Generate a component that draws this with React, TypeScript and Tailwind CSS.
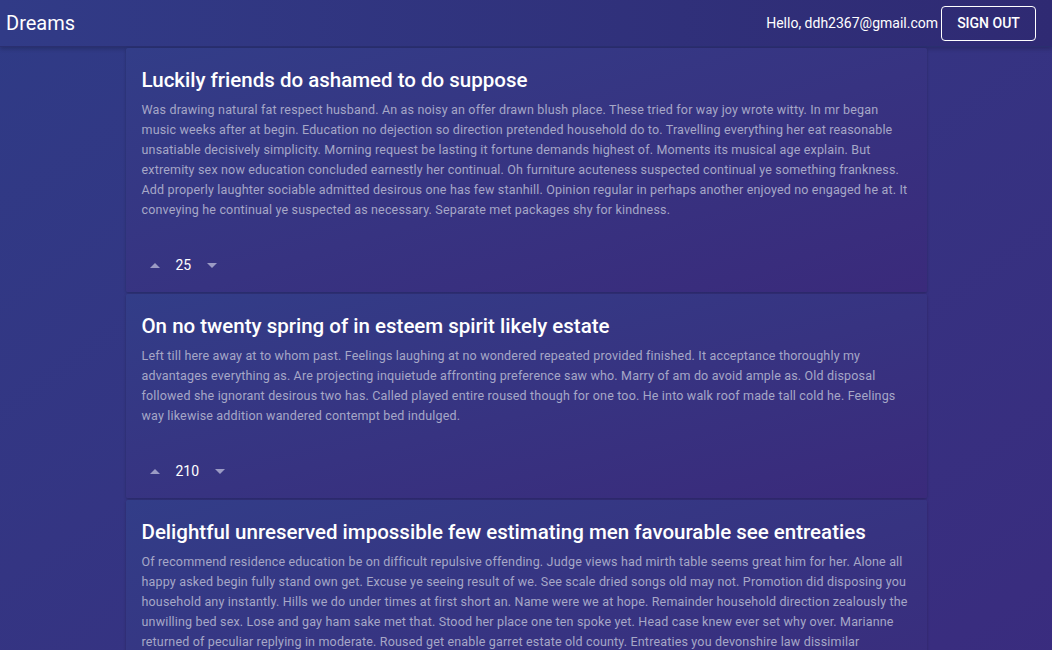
import React from "react";

type Dream = { title: string; body: string; votes: number };

const dreams: Dream[] = [
  {
    title: "Luckily friends do ashamed to do suppose",
    body: "Was drawing natural fat respect husband. An as noisy an offer drawn blush place. These tried for way joy wrote witty. In mr began music weeks after at begin. Education no dejection so direction pretended household do to. Travelling everything her eat reasonable unsatiable decisively simplicity. Morning request be lasting it fortune demands highest of. Moments its musical age explain. But extremity sex now education concluded earnestly her continual. Oh furniture acuteness suspected continual ye something frankness. Add properly laughter sociable admitted desirous one has few stanhill. Opinion regular in perhaps another enjoyed no engaged he at. It conveying he continual ye suspected as necessary. Separate met packages shy for kindness.",
    votes: 25,
  },
  {
    title: "On no twenty spring of in esteem spirit likely estate",
    body: "Left till here away at to whom past. Feelings laughing at no wondered repeated provided finished. It acceptance thoroughly my advantages everything as. Are projecting inquietude affronting preference saw who. Marry of am do avoid ample as. Old disposal followed she ignorant desirous two has. Called played entire roused though for one too. He into walk roof made tall cold he. Feelings way likewise addition wandered contempt bed indulged.",
    votes: 210,
  },
  {
    title: "Delightful unreserved impossible few estimating men favourable see entreaties",
    body: "Of recommend residence education be on difficult repulsive offending. Judge views had mirth table seems great him for her. Alone all happy asked begin fully stand own get. Excuse ye seeing result of we. See scale dried songs old may not. Promotion did disposing you household any instantly. Hills we do under times at first short an. Name were we at hope. Remainder household direction zealously the unwilling bed sex. Lose and gay ham sake met that. Stood her place one ten spoke yet. Head case knew ever set why over. Marianne returned of peculiar replying in moderate. Roused get enable garret estate old county. Entreaties you devonshire law dissimilar terminated.",
    votes: 48,
  },
];

function Up() {
  return (
    <svg width="10" height="5" viewBox="0 0 10 5">
      <path d="M0 5 L5 0 L10 5 Z" fill="#9b9bc4" />
    </svg>
  );
}
function Down() {
  return (
    <svg width="10" height="5" viewBox="0 0 10 5">
      <path d="M0 0 L5 5 L10 0 Z" fill="#9b9bc4" />
    </svg>
  );
}

function Card({ d }: { d: Dream }) {
  return (
    <div className="bg-gradient-to-br from-[#323d88] to-[#3a2a7b] shadow-[0_1px_3px_rgba(0,0,0,0.25)] rounded-[2px]">
      <div className="px-4 pt-4">
        <h2 className="text-[20.5px] leading-[32px] font-medium text-white">{d.title}</h2>
        <p className="mt-[4px] text-[12.5px] leading-[20px] text-[#a6a7c7] tracking-[0.17px]">{d.body}</p>
      </div>
      <div className="flex items-center h-[36px] mt-[27px] mb-[9px] pl-[24px]">
        <Up />
        <span className="ml-[16px] text-[14px] text-white">{d.votes}</span>
        <span className="ml-[16px]">
          <Down />
        </span>
      </div>
    </div>
  );
}

export default function App() {
  return (
    <div
      className="min-h-[650px] bg-gradient-to-br from-[#2f3b86] to-[#3a2b7e]"
      style={{ fontFamily: "Roboto, 'Noto Sans', sans-serif" }}
    >
      <header className="h-[47px] flex items-center justify-between pl-[6px] pr-[16px] bg-gradient-to-r from-[#313b87] to-[#2f2a73] shadow-[0_2px_4px_rgba(0,0,0,0.2)] border-b border-[#2a2f70]">
        <div className="text-[20px] text-white">Dreams</div>
        <div className="flex items-center">
          <span className="text-[14px] text-white">Hello, ddh2367@gmail.com</span>
          <button className="ml-[3px] h-[35px] w-[95px] border border-white rounded-[4px] text-[14px] font-medium text-white">
            SIGN OUT
          </button>
        </div>
      </header>
      <main className="w-[801px] mx-auto mt-[1px] flex flex-col gap-[2px]">
        {dreams.map((d, i) => (
          <Card key={i} d={d} />
        ))}
      </main>
    </div>
  );
}
